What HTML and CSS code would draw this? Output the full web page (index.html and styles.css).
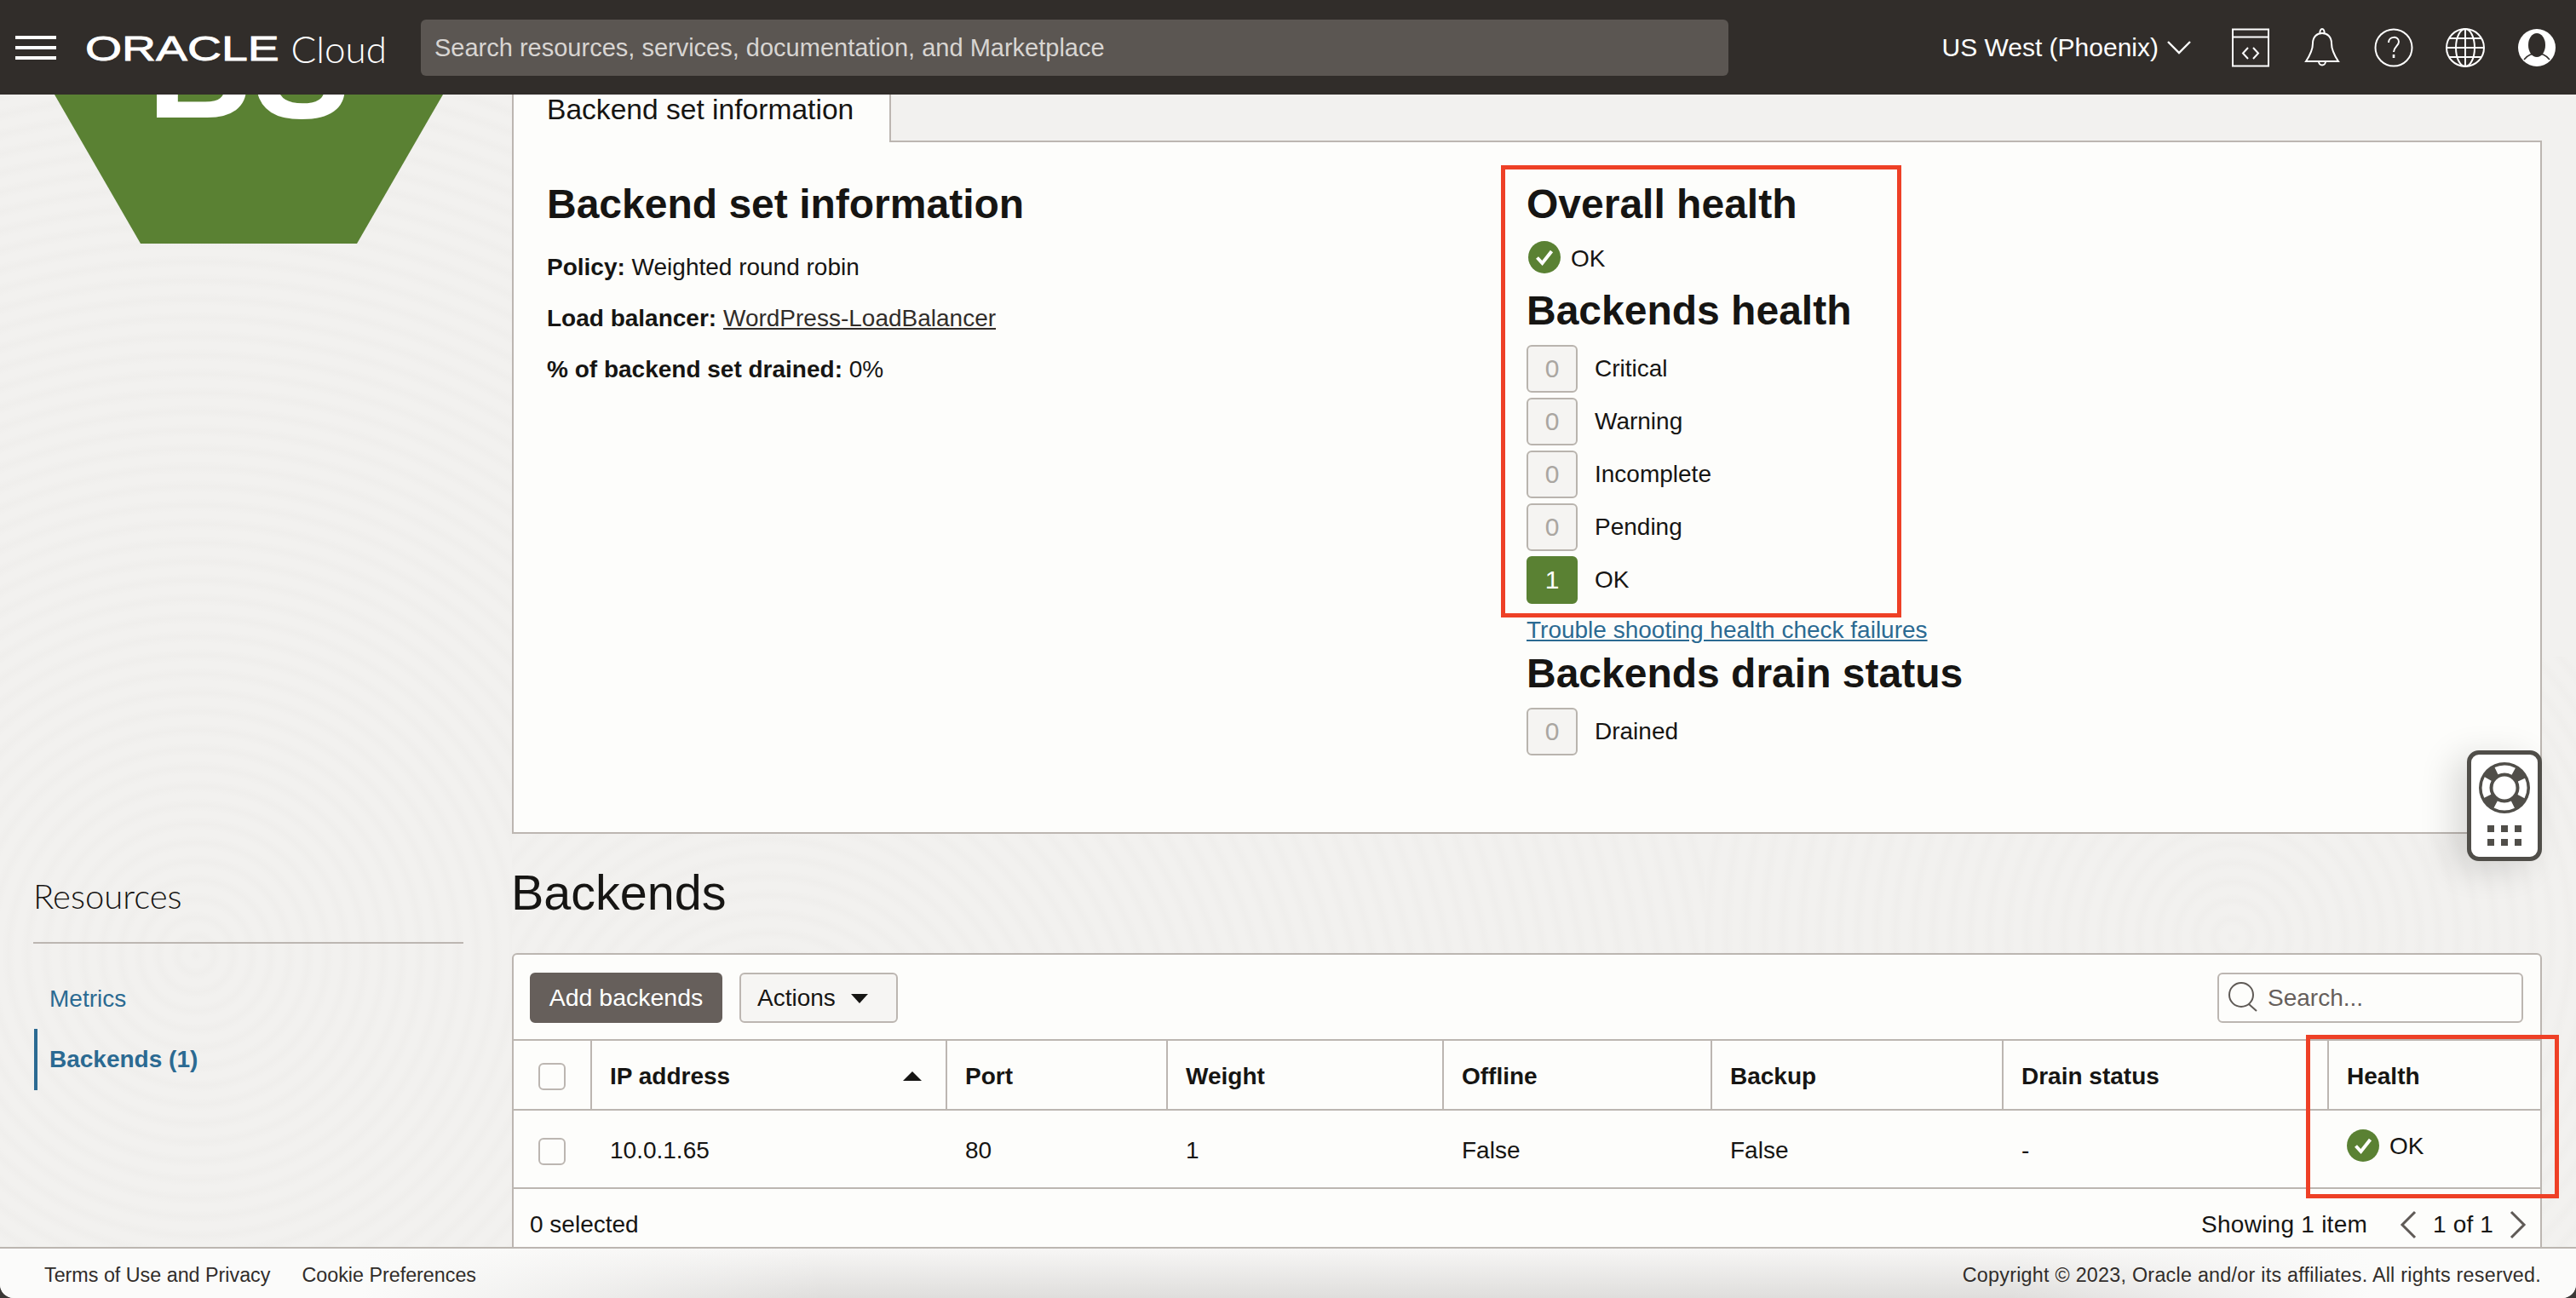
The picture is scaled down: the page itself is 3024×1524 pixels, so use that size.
FILE: index.html
```html
<!DOCTYPE html>
<html lang="en">
<head>
<meta charset="utf-8">
<title>Backend set information</title>
<link rel="stylesheet" href="styles.css">
</head>
<body>
<div class="page">
  <header class="topbar">
    <svg class="burger" width="48" height="28" viewBox="0 0 48 28"><path d="M0 2h48M0 14h48M0 26h48" stroke="#fff" stroke-width="4"/></svg>
    <div class="brand"><span class="oracle">ORACLE</span><span class="cloud">Cloud</span></div>
    <div class="global-search">Search resources, services, documentation, and Marketplace</div>
    <div class="region">US West (Phoenix)
      <svg width="28" height="16" viewBox="0 0 28 16"><path d="M1 1l13 13L27 1" fill="none" stroke="#fff" stroke-width="2.4"/></svg>
    </div>
    <div class="top-icons">
      <svg width="48" height="48" viewBox="0 0 48 48" fill="none" stroke="#fff" stroke-width="2"><rect x="3" y="2.5" width="42" height="43"/><path d="M3 11.5h42M21 24l-6 6.5 6 6.5M27 24l6 6.5-6 6.5"/></svg>
      <svg width="48" height="48" viewBox="0 0 48 48" fill="none" stroke="#fff" stroke-width="2"><path d="M5 40C9 34 13 27 13 19 13 11 18 7 24 7s11 4 11 12c0 8 4 15 8 21z"/><path d="M21.500 7C21 4 22.500 2 24 2s3 2 2.500 5M20 40c0 6 8 6 8 0"/></svg>
      <svg width="48" height="48" viewBox="0 0 48 48" fill="none" stroke="#fff" stroke-width="2"><circle cx="24" cy="24" r="21.500"/><path d="M18 18c0-8 12-8 12-1 0 5-6 6-6 12"/><path d="M24 32v4" stroke-width="2.600"/></svg>
      <svg width="48" height="48" viewBox="0 0 48 48" fill="none" stroke="#fff" stroke-width="2"><circle cx="24" cy="24" r="22"/><ellipse cx="24" cy="24" rx="11" ry="22"/><path d="M24 2v44M2 24h44M5 13h38M5 35h38"/></svg>
      <svg width="48" height="48" viewBox="0 0 48 48"><circle cx="24" cy="24" r="22" fill="#fff"/><ellipse cx="24" cy="21" rx="10" ry="14" fill="#312d2a"/><path d="M9 38c5-6 9-7 15-7s10 1 15 7" fill="none" stroke="#312d2a" stroke-width="1.500"/></svg>
    </div>
  </header>

  <main class="main">
    <aside class="sidebar">
      <div class="hexagon"><span>BS</span></div>
      <h2 class="res-title">Resources</h2>
      <nav class="res-nav">
        <a class="res-link">Metrics</a>
        <a class="res-link active">Backends (1)</a>
      </nav>
    </aside>

    <section class="content">
      <div class="tabs"><div class="tab">Backend set information</div></div>
      <div class="panel">
        <div class="col-info">
          <h2 class="h2">Backend set information</h2>
          <p class="meta first"><b>Policy:</b> Weighted round robin</p>
          <p class="meta"><b>Load balancer:</b> <a class="plain-link">WordPress-LoadBalancer</a></p>
          <p class="meta"><b>% of backend set drained:</b> 0%</p>
        </div>
        <div class="col-health">
          <h2 class="h2">Overall health</h2>
          <div class="status top-status">
            <svg width="38" height="38" viewBox="0 0 38 38"><circle cx="19" cy="19" r="19" fill="#5a8133"/><path d="M10.500 19.500l6 6.500 11-14" fill="none" stroke="#fff" stroke-width="4"/></svg>
            <span>OK</span>
          </div>
          <h2 class="h2 sub">Backends health</h2>
          <ul class="counts">
            <li class="count"><span class="num">0</span>Critical</li>
            <li class="count"><span class="num">0</span>Warning</li>
            <li class="count"><span class="num">0</span>Incomplete</li>
            <li class="count"><span class="num">0</span>Pending</li>
            <li class="count"><span class="num on">1</span>OK</li>
          </ul>
          <a class="trouble">Trouble shooting health check failures</a>
          <h2 class="h2 drain">Backends drain status</h2>
          <ul class="counts">
            <li class="count"><span class="num">0</span>Drained</li>
          </ul>
        </div>
      </div>

      <h1 class="section-title">Backends</h1>
      <div class="card">
        <div class="toolbar">
          <button class="btn primary">Add backends</button>
          <button class="btn actions">Actions<svg width="20" height="11" viewBox="0 0 20 11"><path d="M0 0h20L10 11z" fill="#161513"/></svg></button>
          <div class="table-search">
            <svg width="36" height="36" viewBox="0 0 36 36" fill="none" stroke="#5f5a56" stroke-width="2"><circle cx="16" cy="15" r="14"/><path d="M25 26l9 8"/></svg>
            <span>Search...</span>
          </div>
        </div>
        <table class="grid">
          <colgroup>
            <col class="c-check"><col class="c-ip"><col class="c-port"><col class="c-weight"><col class="c-off"><col class="c-back"><col class="c-drain"><col class="c-health">
          </colgroup>
          <thead>
            <tr>
              <th class="check"><span class="box"></span></th>
              <th><div class="sort">IP address<svg width="22" height="11" viewBox="0 0 22 11"><path d="M11 0l11 11H0z" fill="#161513"/></svg></div></th>
              <th>Port</th><th>Weight</th><th>Offline</th><th>Backup</th><th>Drain status</th><th>Health</th>
            </tr>
          </thead>
          <tbody>
            <tr>
              <td class="check"><span class="box"></span></td>
              <td>10.0.1.65</td><td>80</td><td>1</td><td>False</td><td>False</td><td>-</td>
              <td class="health-cell">
                <div class="status">
                  <svg width="38" height="38" viewBox="0 0 38 38"><circle cx="19" cy="19" r="19" fill="#5a8133"/><path d="M10.500 19.500l6 6.500 11-14" fill="none" stroke="#fff" stroke-width="4"/></svg>
                  <span>OK</span>
                </div>
              </td>
            </tr>
          </tbody>
        </table>
        <div class="table-foot">
          <span>0 selected</span>
          <div class="pager">
            <span class="showing">Showing 1 item</span>
            <svg width="20" height="34" viewBox="0 0 20 34"><path d="M18 2L3 17l15 15" fill="none" stroke="#5f5a56" stroke-width="3"/></svg>
            <span>1 of 1</span>
            <svg width="20" height="34" viewBox="0 0 20 34"><path d="M2 2l15 15L2 32" fill="none" stroke="#5f5a56" stroke-width="3"/></svg>
          </div>
        </div>
      </div>
    </section>
  </main>

  <footer class="footer">
    <div class="foot-links"><a>Terms of Use and Privacy</a><a>Cookie Preferences</a></div>
    <div class="copyright">Copyright © 2023, Oracle and/or its affiliates. All rights reserved.</div>
  </footer>

  <div class="help-widget">
    <svg width="64" height="64" viewBox="0 0 64 64"><circle cx="32" cy="32" r="30" fill="#504e49"/><circle cx="32" cy="32" r="22" fill="none" stroke="#fff" stroke-width="9" stroke-dasharray="21 13.560" stroke-dashoffset="10.500"/><circle cx="32" cy="32" r="13.500" fill="#fff"/></svg>
    <div class="dots"><i></i><i></i><i></i><i></i><i></i><i></i></div>
  </div>
  <div class="mark mark-health"></div>
  <div class="mark mark-col"></div>
</div>
</body>
</html>
```

FILE: styles.css
```css
* { box-sizing: border-box; }
html, body { margin: 0; height: 100%; }
body { background: #3a3836; font-family: "Liberation Sans", Arial, sans-serif; font-size: 28px; color: #161513; }
.page { position: relative; width: 3024px; height: 1524px; display: flex; flex-direction: column; overflow: hidden; }

.topbar { height: 111px; flex: none; background: #312d2a; display: flex; align-items: center; padding: 0 22px 0 18px; color: #fff; position: relative; z-index: 3; }
.burger { flex: none; }
.brand { display: flex; align-items: center; width: 394px; margin-left: 34px; flex: none; margin-top: 2px; }
.oracle { display: inline-block; font-size: 40px; line-height: 40px; margin-right: 77px; transform: scaleX(1.385); transform-origin: left center; -webkit-text-stroke: .8px #fff; }
.cloud { font-family: Lato, "Liberation Sans", sans-serif; font-weight: 300; font-size: 44px; line-height: 40px; }
.global-search { width: 1535px; height: 66px; flex: none; background: #5b5652; border-radius: 6px; color: #d8d5d2; font-size: 29px; line-height: 66px; padding-left: 16px; }
.region { margin-left: auto; display: flex; align-items: center; gap: 10px; font-size: 30px; white-space: nowrap; }
.top-icons { display: flex; gap: 36px; margin-left: 46px; }

.main { height: 1353px; flex: none; display: flex; overflow: hidden; position: relative;
  background-color: #f2f1ef;
  background-repeat: no-repeat;
  background-size: 601px 1353px, 1400px 693px, 1023px 693px;
  background-position: 0 0, 601px 660px, 2001px 660px;
  background-image:
    repeating-radial-gradient(circle at 230px 1010px, rgba(90,80,70,.016) 0, transparent 8px, transparent 14px, rgba(90,80,70,.016) 22px),
    repeating-radial-gradient(circle at 300px 500px, rgba(90,80,70,.016) 0, transparent 8px, transparent 14px, rgba(90,80,70,.016) 22px),
    repeating-radial-gradient(circle at 620px 330px, rgba(90,80,70,.016) 0, transparent 8px, transparent 14px, rgba(90,80,70,.016) 22px); }

.sidebar { width: 601px; flex: none; }
.hexagon { width: 508px; height: 440px; margin: -265px 0 0 38px; background: #5a8133; clip-path: polygon(25% 0, 75% 0, 100% 50%, 75% 100%, 25% 100%, 0 50%); display: flex; align-items: center; justify-content: center; color: #fff; font-weight: 700; font-size: 172px; line-height: 1; padding-top: 24px; }
.res-title { font-family: Lato, "Liberation Sans", sans-serif; font-weight: 300; font-size: 40px; line-height: 50px; margin: 741px 0 0 39px; width: 505px; height: 81px; border-bottom: 2px solid #bcb6b1; color: #161513; }
.res-nav { display: flex; flex-direction: column; margin: 45px 0 0 40px; }
.res-link { color: #2b6a92; line-height: 40px; padding-left: 18px; height: 40px; }
.res-link.active { font-weight: 700; height: 72px; line-height: 72px; margin-top: 15px; padding-left: 14px; border-left: 4px solid #2b6a92; }

.content { width: 2383px; flex: none; }
.tabs { height: 54px; display: flex; margin-top: 0; position: relative; z-index: 1; }
.tab { width: 445px; height: 56px; background: #fdfdfb; border: solid #bcb6b1; border-width: 0 2px 0 2px; padding-left: 39px; line-height: 35px; font-size: 33.6px; }
.panel { height: 814px; background: #fdfdfb; border: 2px solid #bcb6b1; padding: 45px 0 0 39px; display: grid; grid-template-columns: 1150px 1fr; }
.h2 { margin: 0; font-size: 48px; line-height: 56px; font-weight: 700; color: #161513; }
.meta { margin: 20px 0 0; line-height: 40px; }
.meta.first { margin-top: 26px; }
.plain-link { text-decoration: underline; color: #312d2a; }
.status { display: flex; align-items: center; gap: 12px; }
.top-status { margin-top: 15px; height: 38px; padding-left: 2px; }
.top-status span { padding-top: 3px; }
.sub { margin-top: 16px; }
.counts { list-style: none; margin: 12px 0 0; padding: 0; display: flex; flex-direction: column; gap: 6px; }
.count { display: flex; align-items: center; height: 56px; gap: 20px; }
.num { width: 60px; height: 56px; background: #f5f4f2; border: 2px solid #b9b4ae; border-radius: 6px; color: #aaa6a1; display: flex; align-items: center; justify-content: center; font-size: 30px; }
.num.on { background: #5a8133; border-color: #5a8133; color: #fff; }
.trouble { display: block; margin-top: 11px; line-height: 40px; color: #2b6a92; text-decoration: underline; }
.drain { margin-top: 3px; }

.section-title { margin: 34px 0 0 -1px; font-size: 57.5px; line-height: 70px; font-weight: 400; color: #161513; }
.card { margin-top: 36px; background: #fdfdfb; border: 2px solid #bcb6b1; border-radius: 6px 6px 0 0; height: 400px; }
.toolbar { display: flex; align-items: center; gap: 20px; padding: 20px 20px 19px 19px; height: 99px; }
.btn { height: 59px; border-radius: 6px; border: 2px solid #bcb6b1; background: #f6f5f3; font: inherit; color: #161513; padding: 2px 19px 0; display: flex; align-items: center; gap: 18px; }
.btn.actions { width: 186px; }
.btn.primary { background: #665f5b; border-color: #665f5b; color: #fff; width: 226px; justify-content: center; padding: 1px 0 0; font-size: 28.5px; }
.table-search { margin-left: auto; width: 359px; height: 59px; border: 2px solid #bcb6b1; border-radius: 6px; display: flex; align-items: center; gap: 11px; padding-left: 10px; color: #665f5b; }
.table-search span { padding-top: 2px; }

.grid { width: 2379px; table-layout: fixed; border-collapse: separate; border-spacing: 0; border-top: 2px solid #bcb6b1; }
.c-check { width: 92px; } .c-ip { width: 417px; } .c-port { width: 259px; } .c-weight { width: 324px; }
.c-off { width: 315px; } .c-back { width: 342px; } .c-drain { width: 382px; } .c-health { width: 248px; }
.grid th { height: 82px; padding: 3px 0 0 21px; text-align: left; font-weight: 700; border-bottom: 2px solid #bcb6b1; border-right: 2px solid #bcb6b1; }
.grid th:last-child { border-right: 0; }
.grid td { height: 92px; padding: 27px 0 0 21px; vertical-align: top; line-height: 40px; border-bottom: 2px solid #bcb6b1; }
.grid .check { padding-left: 29px; }
.grid td.check { padding-top: 32px; }
.grid td.health-cell { padding-top: 20px; }
.health-cell span { padding-top: 2px; }
.box { display: block; width: 32px; height: 32px; background: #fdfdfb; border: 2px solid #bcb6b1; border-radius: 6px; }
.sort { display: flex; align-items: center; justify-content: space-between; padding-right: 28px; }

.table-foot { display: flex; justify-content: space-between; padding: 22px 16px 0 19px; line-height: 40px; }
.pager { display: flex; align-items: center; gap: 19px; letter-spacing: .15px; }
.showing { margin-right: 19px; letter-spacing: .25px; }

.footer { height: 60px; flex: none; border-top: 2px solid #bcb6b1; border-radius: 0 0 16px 16px; display: flex; align-items: center; justify-content: space-between; padding: 4px 41px 0 52px; font-size: 23.3px; color: #312d2a; position: relative; z-index: 2;
  background: linear-gradient(90deg, #fbfbfa 0, #fbfbfa 14%, rgba(251,251,250,0) 32%, rgba(251,251,250,0) 78%, #fbfbfa 92%), linear-gradient(180deg, #f7f6f5, #dfdedc); }
.foot-links { display: flex; gap: 37px; }
.copyright { letter-spacing: .26px; }

.help-widget { position: absolute; left: 2896px; top: 881px; width: 88px; height: 130px; background: #fff; border: 5px solid #504e49; border-radius: 14px; box-shadow: -16px 8px 40px rgba(0,0,0,.14); display: flex; flex-direction: column; align-items: center; padding-top: 7px; z-index: 4; }
.dots { display: grid; grid-template-columns: repeat(3, 8px); gap: 8px; margin-top: 12px; }
.dots i { width: 8px; height: 8px; background: #504e49; }

.mark { position: absolute; border: 5px solid #ee4026; z-index: 4; }
.mark-health { left: 1762px; top: 194px; width: 470px; height: 531px; }
.mark-col { left: 2707px; top: 1215px; width: 297px; height: 192px; }
```
